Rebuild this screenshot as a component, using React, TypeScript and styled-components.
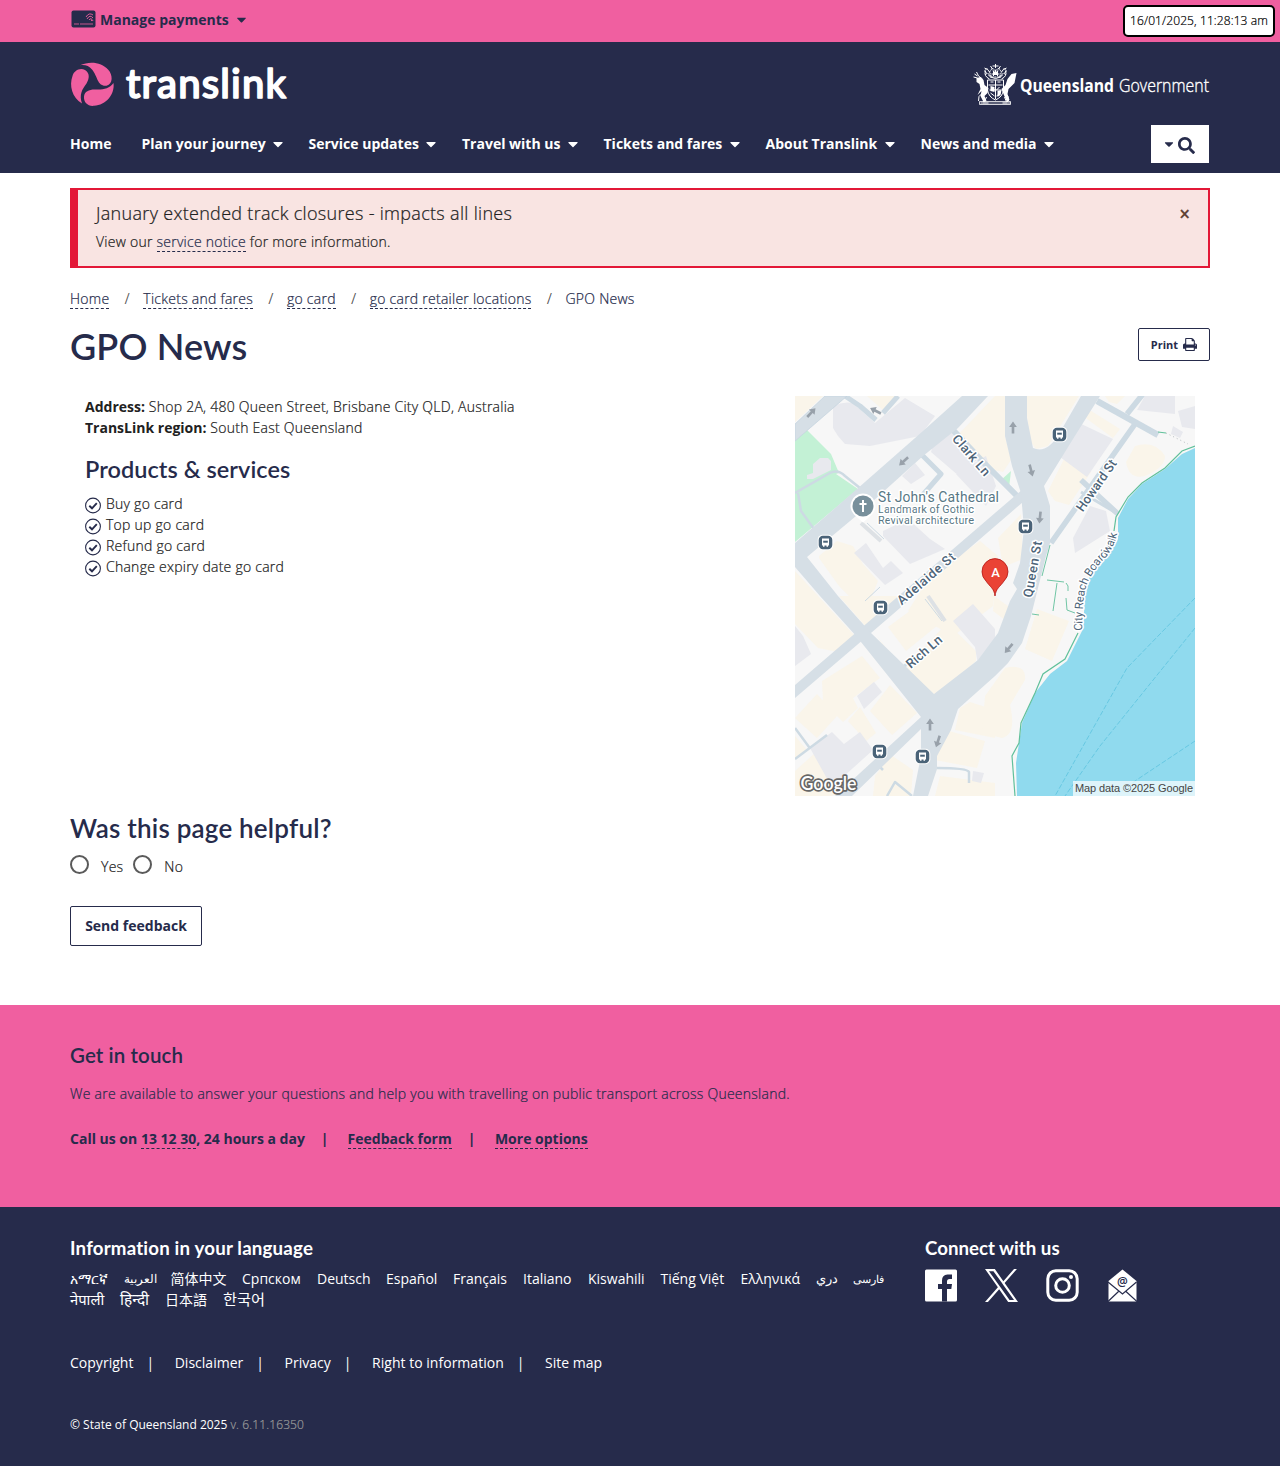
import React from "react";
import styled, { createGlobalStyle, css } from "styled-components";
import { FaCaretDown, FaSearch } from "react-icons/fa";

const navy = "#262b4b";
const pink = "#f05fa0";
const body = `"Open Sans", "Noto Sans", "Noto Sans CJK SC", sans-serif`;
const display = `Lato, "Open Sans", sans-serif`;

const Global = createGlobalStyle`
  body { margin: 0; background: #fff; font-family: ${body}; font-size: 14px; line-height: 21px; color: #212121; }
  * { box-sizing: border-box; }
  h1, h2, h3, p, ul { margin: 0; padding: 0; font-weight: inherit; }
  h1, h2, h3 { font-variant-ligatures: none; }
  ul { list-style: none; }
  button { font-family: inherit; cursor: pointer; }
`;

const lightText = css`
  font-weight: 300;
  letter-spacing: 0.25px;
  -webkit-text-stroke: 0.22px currentColor;
`;

const Page = styled.div`
  position: relative;
  width: 1280px;
  height: 1466px;
  overflow: hidden;
  display: flex;
  flex-direction: column;
`;
const Container = styled.div`
  width: 1140px;
  margin: 0 auto;
`;

const TopBar = styled.div`
  height: 42px;
  background: ${pink};
`;
const Payments = styled(Container)`
  display: flex;
  align-items: center;
  height: 39px;
  color: ${navy};
  font-weight: 700;
  padding-left: 1px;
  svg:first-child { margin-right: 4px; margin-top: -2px; }
  svg:last-child { margin-left: 5px; }
`;
const Timestamp = styled.div`
  ${lightText}
  position: absolute;
  top: 5px;
  right: 5px;
  width: 152px;
  height: 32px;
  border: 2px solid #000;
  border-radius: 5px;
  background: #fff;
  color: #000;
  font-size: 12px;
  line-height: 27px;
  letter-spacing: 0.1px;
  text-align: center;
  white-space: nowrap;
`;

const Header = styled.header`
  height: 131px;
  background: ${navy};
  color: #fff;
`;
const Brand = styled(Container)`
  display: flex;
  justify-content: space-between;
  align-items: center;
  height: 83px;
  svg { display: block; overflow: visible; }
`;
const Nav = styled(Container)`
  display: flex;
  align-items: center;
  height: 38px;
`;
const NavItem = styled.a<{ $width: number }>`
  width: ${(p) => p.$width}px;
  display: flex;
  align-items: center;
  font-weight: 700;
  margin-top: -2px;
  white-space: nowrap;
  svg { margin: 2px 0 0 4.500px; }
`;
const SearchButton = styled.button`
  width: 58px;
  height: 38px;
  margin-left: auto;
  margin-right: 1px;
  border: 0;
  background: #fff;
  color: ${navy};
  display: flex;
  align-items: center;
  gap: 2px;
  padding: 3px 0 0 11px;
  svg:first-child { margin-top: -4px; }
`;

const Alert = styled.section`
  ${lightText}
  height: 80px;
  margin-top: 15px;
  border: 2px solid #e31837;
  border-left-width: 8px;
  background: #f9e4e2;
  padding: 10px 18px 0;
  display: flex;
  justify-content: space-between;
`;
const AlertTitle = styled.h2`
  font-size: 18px;
  line-height: 27px;
  letter-spacing: 0.31px;
`;
const AlertText = styled.p`
  margin-top: 4px;
`;
const Close = styled.span`
  color: #5c4033;
  font-size: 19px;
  font-weight: 600;
  line-height: 28px;
  letter-spacing: 0;
`;
const DashLink = styled.a`
  color: ${navy};
  border-bottom: 1px dashed ${navy};
  line-height: 19px;
`;

const Crumbs = styled.nav`
  ${lightText}
  display: flex;
  align-items: flex-start;
  height: 21px;
  margin-top: 20px;
  color: ${navy};
  ${DashLink} { margin-top: 1px; }
`;
const Slash = styled.span`
  width: 34px;
  padding-left: 15.500px;
  color: #444;
`;
const TitleRow = styled.div`
  display: flex;
  justify-content: space-between;
  margin-top: 19px;
  height: 68px;
`;
const Title = styled.h1`
  font-family: ${display};
  font-size: 36px;
  line-height: 36px;
  font-weight: 600;
  color: ${navy};
  letter-spacing: 0.15px;
`;
const PrintButton = styled.button`
  width: 72px;
  height: 33px;
  border: 1px solid ${navy};
  border-radius: 2px;
  background: #fff;
  color: ${navy};
  font-size: 11px;
  font-weight: 700;
  display: flex;
  align-items: center;
  justify-content: center;
  gap: 5px;
  padding: 0;
`;
const Details = styled.div`
  display: flex;
  justify-content: space-between;
  padding: 0 15px;
  height: 400px;
`;
const Detail = styled.p`
  ${lightText}
`;
const Strong = styled.b`
  font-weight: 700;
  letter-spacing: 0;
  -webkit-text-stroke: 0;
`;
const Services = styled.h2`
  font-family: ${display};
  font-size: 23.500px;
  line-height: 30px;
  font-weight: 600;
  color: ${navy};
  margin: 16px 0 9px;
  letter-spacing: 0.05px;
`;
const Service = styled.li`
  ${lightText}
  display: flex;
  height: 21px;
  svg { margin: 3.500px 5px 0 0; }
`;

const Helpful = styled.h2`
  font-family: ${display};
  font-size: 26px;
  line-height: 32px;
  font-weight: 600;
  color: ${navy};
  margin-top: 16px;
  letter-spacing: 0.2px;
`;
const Choices = styled.div`
  ${lightText}
  display: flex;
  height: 30px;
  margin-top: 11px;
`;
const Choice = styled.label`
  display: flex;
  line-height: 24px;
  margin-right: 10px;
`;
const Radio = styled.span`
  width: 19px;
  height: 19px;
  border: 2px solid #5a5a5a;
  border-radius: 50%;
  margin-right: 12px;
`;
const Feedback = styled.button`
  display: block;
  width: 132px;
  height: 40px;
  margin-top: 21px;
  border: 1px solid ${navy};
  border-radius: 2px;
  background: #fff;
  color: ${navy};
  font-size: 14px;
  font-weight: 700;
  padding: 0 0 2px;
`;

const Contact = styled.section`
  height: 202px;
  margin-top: 59px;
  background: ${pink};
  color: ${navy};
  padding-top: 37px;
`;
const ContactTitle = styled.h2`
  font-family: ${display};
  font-size: 20.500px;
  line-height: 26px;
  font-weight: 600;
  letter-spacing: 0.1px;
`;
const ContactText = styled.p`
  ${lightText}
  margin-top: 15px;
`;
const ContactLinks = styled.div`
  display: flex;
  align-items: flex-start;
  margin-top: 24px;
  font-weight: 700;
  > a { margin-top: 1px; }
`;
const Bar = styled.span<{ $before: number; $after: number }>`
  padding-left: ${(p) => p.$before}px;
  padding-right: ${(p) => p.$after}px;
`;

const Footer = styled.footer`
  height: 259px;
  background: ${navy};
  color: #fff;
  font-weight: 400;
  padding-top: 29px;
`;
const FooterTop = styled(Container)`
  display: flex;
  height: 116px;
`;
const FooterTitle = styled.h3<{ $spacing?: number }>`
  font-family: ${display};
  font-size: 18.700px;
  line-height: 24px;
  font-weight: 700;
  letter-spacing: ${(p) => p.$spacing ?? 0}px;
`;
const Languages = styled.div`
  width: 855px;
`;
const LangList = styled.ul`
  display: flex;
  flex-wrap: wrap;
  column-gap: 16px;
  width: 830px;
  margin-top: 8px;
`;
const Lang = styled.li<{ $width: number; $size: number }>`
  width: ${(p) => p.$width}px;
  height: 21px;
  font-size: ${(p) => p.$size}px;
  white-space: nowrap;
`;
const Social = styled.div`
  display: flex;
  margin-top: 9px;
  gap: 28px;
`;
const Legal = styled(Container)`
  display: flex;
  letter-spacing: 0.02px;
`;
const Copyright = styled(Container)`
  margin-top: 41px;
  font-size: 12px;
`;
const Version = styled.span`
  ${lightText}
  color: #999;
  letter-spacing: 0.12px;
`;

const CardIcon = () => (
  <svg width="25" height="18" viewBox="0 0 25 18">
    <rect x="0.5" y="0.5" width="24" height="17" rx="2" fill={navy} />
    <path d="M3 14h5M9 14h13" stroke={pink} strokeWidth="0.8" />
    <g fill="none" stroke={pink} strokeWidth="0.9">
      <path d="M15 7q3-5 7-2M16 9q3-5 6-1M18 10q2-3 4 1M20 10l1 1" />
    </g>
  </svg>
);

const TranslinkLogo = () => (
  <svg width="222" height="46" viewBox="0 0 222 46">
    <g fill={pink} transform="translate(0 .5)">
      <path d="M10 3.8C20-1 32 1 38 8c5 5 5.200 15-1.500 16.200C27 25 28 15 22 8 19 4.500 15 3 10 3.800Z" />
      <path d="M12 42C2 36-1 24 2.500 14.500 4 9 10 6 15 8.500c5 3 4.500 8.500 1.500 13.500C12 28 9 33 12 42Z" />
      <path d="M43.500 21.500C45 33 36 43.500 24 44.300 18 45 13.500 41 14 35c.5-5 5-7 10.500-7C33 28.500 39 27.500 43.500 21.500Z" />
    </g>
    <text x="56" y="37" fontFamily="Lato, sans-serif" fontSize="40" fontWeight="500" fill="#fff" stroke="#fff" strokeWidth="1.600" strokeLinejoin="round" textLength="160">translink</text>
  </svg>
);

const Crest = () => (
  <g fill="none" stroke="#fff" strokeWidth="1" transform="translate(.5 1)">
    <path d="M16 9l3-4 3 3 3-3 3 4-2 5h-8z" strokeDasharray="2 .7" />
    <path d="M13 5l3 4M31 5l-3 4M22 1v4M19 3h6M14 10l4 4M30 10l-4 4M17 14q5 3 10 0M12 8q-2 5 4 8M32 8q2 5-4 8" />
    <path d="M11 5l2 1-2 2 2 2-1 2M33 5l-2 1 2 2-2 2 1 2M17 3l2 3M27 3l-2 3M18 11h8M15 12l3 3M29 12l-3 3M20 8v5M24 8v5" />
    <path d="M14 17h16v10q-1 7-8 10-7-3-8-10z" />
    <path d="M15 22h14M22 17v19M16 27h12M17 19h3M24 19h3M18 24l3 3M26 24l-3 3M17 30l4 3M27 30l-4 3" />
    <path d="M1 11l3 2M0 14l4 1M3 9l2 4M5 13l4 3M5 38q-1-5 4-8M7 40h8M29 40h8M35 38q1-5-4-8M10 32v7M13 34l-2 5M34 32v7M31 34l2 5" />
    <g fill="#fff" stroke="none">
      <path d="M3 15l4-1 3 3 1 5 4 3-1 5-3 3 2 5-3 1-3-6 1-5-4 4 3-6-1-5-3-2z" />
      <path d="M43 10l-2 10-6 6-1 5 2 6-3 1-3-7-2-5 4-4 2-6 4-5z" />
      <path d="M17 23l4 1v5l-4-1zM24 28l4-1-1 5-3 2zM19 6l2 3 1-3 1 3 2-3-1 6h-4z" />
    </g>
    <path d="M6 38.500h31v3H6z" strokeWidth=".8" />
    <path d="M10 40h23" strokeDasharray="1 1" />
  </g>
);

const GovLogo = () => (
  <svg width="237" height="44" viewBox="0 0 237 44">
    <Crest />
    <g fontFamily="'Open Sans', sans-serif" fontSize="17.500" fill="#fff">
      <text x="47" y="29.500" fontWeight="700" textLength="94" lengthAdjust="spacingAndGlyphs">Queensland</text>
      <text x="146" y="29.500" fontWeight="300" stroke="#fff" strokeWidth=".35" textLength="90" lengthAdjust="spacingAndGlyphs">Government</text>
    </g>
  </svg>
);

const PrintIcon = () => (
  <svg width="14" height="13" viewBox="64 128 1664 1536" fill="currentColor">
    <path d="M448 1536h896v-256h-896v256zm0-640h896v-384h-160q-40 0-68-28t-28-68v-160h-640v640zm1152 64q0-26-19-45t-45-19-45 19-19 45 19 45 45 19 45-19 19-45zm128 0v416q0 13-9.500 22.500t-22.500 9.500h-224v160q0 40-28 68t-68 28h-960q-40 0-68-28t-28-68v-160h-224q-13 0-22.500-9.500t-9.500-22.500v-416q0-79 56.500-135.500t135.500-56.500h64v-544q0-40 28-68t68-28h672q40 0 88 20t76 48l152 152q28 28 48 76t20 88v256h64q79 0 135.500 56.500t56.500 135.500z" />
  </svg>
);

const CheckIcon = () => (
  <svg width="16" height="17" viewBox="0 0 16 17" fill="none" stroke={navy}>
    <circle cx="8" cy="8.500" r="7.400" strokeWidth="1.100" />
    <path d="M4.300 8.700l2.700 2.600 4.800-5.100" strokeWidth="1.900" />
  </svg>
);

const BusStop = ({ x, y }: { x: number; y: number }) => (
  <g transform={`translate(${x} ${y})`}>
    <rect x="-7.800" y="-7.800" width="15.600" height="15.600" rx="5" fill="#fff" />
    <rect x="-6.800" y="-6.800" width="13.600" height="13.600" rx="4.200" fill="#4a6378" />
    <path d="M-3.500-4h7v7h-1v1.300h-1.500V3h-2v1.300h-1.500V3h-1z" fill="#fff" />
    <path d="M-2.300-1.800h4.600v2h-4.600z" fill="#4a6378" />
  </g>
);

const Arrow = ({ x, y, r }: { x: number; y: number; r: number }) => (
  <path transform={`translate(${x} ${y}) rotate(${r}) scale(1.100)`} d="M0-6l3.500 5H1.200v6h-2.400v-6h-2.300z" fill="#98a1aa" />
);

const MapPicture = () => (
  <svg width="400" height="400" viewBox="0 0 400 400" fontWeight="400">
    <rect width="400" height="400" fill="#f7f7f7" />
    <g fill="#faf5ea">
      <path d="M0 0h28L0 26zM72 0h30L88 14zM200 0h10v40l6 24-8 12-8-2-38-34z" />
      <path d="M231 0h53l-31 50-12 3-6-8-3-25zM288 20l5-7 32 20-7 9zM270 61l26 15-22 33-14-4-7-10z" />
      <path d="M340 50q20-6 30 10 0 12-20 20-16 4-19-14zM200 54q10-8 11 2v12l-11 8zM203 142l23-24 2 45-20 8zM310 0h20l-8 8-8-2z" />
      <path d="M24 160l18-15 16 5 10 18 15 17-10 25-15-6-14-14-20-28z" />
      <path d="M0 175l60 65-17 16-20-4-23-24zM44 200l28 32 33-32zM135 180l50-35 18 15-5 50-40 30-45-25z" />
      <path d="M93 231l30-22 20 20-32 26zM82 240l20 26 3 8zM110 272l42-45 29 28v10l-40 35z" />
      <path d="M27 285l40-25 18 22-27 20 5 10-15 14-20-20zM0 322l22-24 20 22-20 22zM75 315l20-26 27 28-25 22zM53 325l12-14 16 26-10 8z" />
      <path d="M0 340l12 14-12 8zM0 375l20-18 22 40-5 3H0zM80 380l16-21 22 15-2 26H78zM165 312l10-6 25 8v28l-40-8zM147 333l43 12-8 27-42-8zM145 380l55 7v13h-60z" />
      <path d="M190 300l20-28q22-5 20 12l-15 25q7 30-8 33l-20-5zM242 213l32 12-17 40-27-12zM199 200l25 18-6 12-20-15z" />
    </g>
    <g fill="#e8e9ee">
      <path d="M38 10q10-5 20-3l22 20 30-25 30 18-15 20-50 10-25-2-7-8-5-8z" />
      <path d="M140 42l16-8 28 28-20 18-28-24zM161 78l30-18 10 30-10 20zM107 80l13-13 10 12-14 9zM88 135l25-12 22 20 15 10-35 15-27-28z" />
      <path d="M59 157l12-10 17 25 8-7 12 12-18 12zM158 225l20-17 22 25v24l-17 12-3-18z" />
      <path d="M280 25l38 18-26 38-27-20zM350 0h30v18l-38-4zM383 15l17-5v23l-13-2zM295 110l16 5 4 20-35 22-2-15zM378 30l10 6-3 6-9-4z" />
      <path d="M0 230l8 10 8 18-16 12zM62 300l17-14 8 10-18 17zM15 352l22-16 12 12 16-12 13 18-30 27-8 16zM178 375l11 2-3 10-9-2z" />
    </g>
    <g fill="#c3f1d5">
      <path d="M0 45l12-11 24 24 8 19-3 1 22 15L0 146z" />
      <path d="M205 85l11-10-2 17z" />
    </g>
    <path d="M12 79l6-2v-9l7-6h8l3 3v9l-18 9h-6z" fill="#e8e9ee" />
    <g fill="none" stroke="#cddae3" strokeLinejoin="round">
      <path d="M0 97l35-20q8-4 15 3l15 12M3 97l3 18 13 18" strokeWidth="2.500" />
      <path d="M50 0l15 10 16 14M88 17l15-17M126 58l20 20-20 23" strokeWidth="5" />
      <path d="M158 34l30 32 34 34" strokeWidth="6" />
      <path d="M256 147l84-119M332 18l16-20M286 84l37 34" strokeWidth="5.500" />
      <path d="M302 5l61 34" strokeWidth="6.500" />
      <path d="M286 96l37 22M107 272l10-8" strokeWidth="3" />
      <path d="M0 332l14 19M0 363l32-24M142 372q30 0 32 4v11M92 400l8-14 17 14M84 370l4 4" strokeWidth="2.500" />
      <path d="M72 127l17 16M130 203l17 22M70 205l15-14" strokeWidth="1" />
    </g>
    <g fill="#d6dfe6">
      <path d="M30 0L0 28v17L52 0z" stroke="#c3d2de" strokeWidth=".7" />
      <path d="M0 289L57 240 200 117 228 93V106L76 237 0 302z" />
      <path d="M167 0L128 35 62 93 0 147V171L25 200 62 241 126 321 40 400H57L126 333V360L118 400H133L142 373V360L156 334 163 313 200 280 213 267 227 247 236 220 241 200 251 160 255 147V110L249 90 278 43 305 0H286L264 38Q252 58 238 52L232 22V0H210V40L217 70 226 97 229 133 225 167 218 187 222 193 215 205 203 237 183 264 139 298 76 237 43 200 12 161 67 115 128 60 163 32 193 0z" />
    </g>
    <path d="M66 127l20 18M133 200l17 25" stroke="#dde1e5" strokeWidth="4" />
    <path d="M400 52l-13 6-17 15-23 15-14 15-10 19v21l-10 17-16 10-7 30-2 33-16 32-17 13-15 19-13 30-6 40 1 33h178z" fill="#90daee" />
    <g fill="none" stroke="#61c09b" strokeWidth="1.200">
      <path d="M400 50l-13 5-17 17-23 15-14 14-12 20-2 14M363 36l8 1M283 237l-13 26-22 15-8 19-14 30-2 20-7 13 3 40" />
      <path d="M255 149l-8 31M252 184l17 2M271 187q3 2 2 8M262 187l-4 28M237 218l7 1M271 202l1 12 8 3" strokeWidth=".9" />
    </g>
    <path d="M371 37l22 11" stroke="#b5bcc0" strokeDasharray="1 3" />
    <g fill="none" stroke="#67c8e2" strokeDasharray="5 2">
      <path d="M400 202l-68 70-72 128M400 232l-95 118-35 50M400 345l-60 40-18 14" />
    </g>
    <Arrow x={16} y={17} r={43} /><Arrow x={81} y={15} r={-63} /><Arrow x={109} y={65} r={228} />
    <Arrow x={218} y={32} r={0} /><Arrow x={236} y={74} r={165} /><Arrow x={245} y={121} r={186} />
    <Arrow x={214} y={252} r={220} /><Arrow x={135} y={329} r={0} /><Arrow x={143} y={345} r={198} />
    <BusStop x={30.500} y={146.500} /><BusStop x={264.500} y={38.500} /><BusStop x={230.500} y={130.500} />
    <BusStop x={85.500} y={211.500} /><BusStop x={84.500} y={355.500} /><BusStop x={127.500} y={360.500} />
    <g fontFamily="Roboto, sans-serif" fill="#4d6478" stroke="#fff" strokeWidth="3" strokeLinejoin="round" paintOrder="stroke" textAnchor="middle">
      <g fontSize="13" fontWeight="500">
        <text transform="translate(173 62) rotate(49)" textLength="50">Clark Ln</text>
        <text transform="translate(305 92) rotate(-55)" textLength="60">Howard St</text>
        <text transform="translate(134 186) rotate(-41)" textLength="72">Adelaide St</text>
        <text transform="translate(242 174) rotate(-80)" textLength="57">Queen St</text>
        <text transform="translate(132 259) rotate(-41)" textLength="43">Rich Ln</text>
      </g>
      <path id="boardwalk" d="M287 235C288 185 292 186 306 166Q320 154 323 133" fill="none" stroke="none" />
      <text fontSize="11.500" textAnchor="start"><textPath href="#boardwalk" textLength="107">City Reach Boardwalk</textPath></text>
      <g textAnchor="start" fill="#587784">
        <text x="83" y="106" fontSize="14" textLength="121">St John's Cathedral</text>
        <text x="83" y="117" fontSize="11" textLength="96">Landmark of Gothic</text>
        <text x="83" y="128" fontSize="11" textLength="96">Revival architecture</text>
      </g>
    </g>
    <path d="M68 97.500a12.500 12.500 0 0 1 9 21l-9 8-9-8a12.500 12.500 0 0 1 9-21z" fill="#fff" />
    <circle cx="68" cy="110" r="10.500" fill="#78909c" />
    <path d="M68 104v12M64.500 108h7" stroke="#fff" strokeWidth="2" />
    <path d="M200 200c-1-8-5-9-9-15a13 13 0 1 1 18 0c-4 6-8 7-9 15z" fill="#ea4335" stroke="#b31412" strokeWidth=".8" />
    <text x="200.500" y="181" textAnchor="middle" fontFamily="Roboto, sans-serif" fontSize="13" fontWeight="500" fill="#fff">A</text>
    <text x="5.500" y="394" fontFamily="Lato, sans-serif" fontSize="19" fontWeight="600" fill="#fff" stroke="#666" strokeWidth="3.500" strokeLinejoin="round" paintOrder="stroke" textLength="56" lengthAdjust="spacingAndGlyphs">Google</text>
    <rect x="278" y="385" width="122" height="15" fill="#fff" opacity=".7" />
    <text x="280" y="396" fontFamily="'Liberation Sans', sans-serif" fontSize="11" fill="#444" textLength="118">Map data ©2025 Google</text>
  </svg>
);

const FacebookIcon = () => (
  <svg width="32" height="33" viewBox="0 0 32 33">
    <rect y=".5" width="32" height="32" rx="1.500" fill="#fff" />
    <path d="M17 32.500V20h-4v-5h4v-3.500Q17 6 22.500 5.500H27v4.500h-2.500Q22 10 22 12.500V15h5l-.7 5H22v12.500z" fill={navy} />
  </svg>
);
const XIcon = () => (
  <svg width="33" height="33" viewBox="0 0 1200 1227" preserveAspectRatio="none" fill="#fff">
    <path d="M714.163 519.284L1160.890 0H1055.030L667.137 450.887L357.328 0H0L468.492 681.821L0 1226.370H105.866L515.491 750.218L842.672 1226.370H1200L714.137 519.284H714.163ZM569.165 687.828L521.697 619.934L144.011 79.694H306.615L611.412 515.685L658.880 583.579L1055.080 1150.300H892.476L569.165 687.854V687.828Z" />
  </svg>
);
const InstagramIcon = () => (
  <svg width="33" height="33" viewBox="0 0 33 33" fill="none" stroke="#fff" strokeWidth="3">
    <rect x="1.800" y="1.800" width="29.400" height="29.400" rx="8" />
    <circle cx="16.500" cy="16.500" r="6.800" />
    <circle cx="25" cy="8" r="2" fill="#fff" stroke="none" />
  </svg>
);
const MailIcon = () => (
  <svg width="30" height="33" viewBox="0 0 30 33">
    <path d="M15.500 .5l14 11.500V32.500h-28V12z" fill="#fff" />
    <path d="M1 13l14.500 12 14-12M1 32.500l10.500-10M30 32.500L19 22.500" fill="none" stroke={navy} strokeWidth="1.200" />
    <text x="15.500" y="16.500" textAnchor="middle" fontFamily="'Open Sans', sans-serif" fontSize="12" fontWeight="600" fill={navy}>@</text>
  </svg>
);

const navItems: [string, number][] = [
  ["Home", 71.5], ["Plan your journey", 167], ["Service updates", 153.5], ["Travel with us", 141.5],
  ["Tickets and fares", 162], ["About Translink", 155], ["News and media", 140],
];
const services = ["Buy go card", "Top up go card", "Refund go card", "Change expiry date go card"];
const languages: [string, number, number][] = [
  ["አማርኛ", 37.5, 14], ["العربية", 31, 12], ["简体中文", 55.5, 14], ["Српском", 59, 14], ["Deutsch", 53, 14],
  ["Español", 51, 14], ["Français", 54, 14], ["Italiano", 49, 14], ["Kiswahili", 56.5, 14], ["Tiếng Việt", 64, 14],
  ["Ελληνικά", 59.5, 14], ["دري", 20.5, 13], ["فارسی", 31, 11], ["नेपाली", 34, 14.8], ["हिन्दी", 29, 15.4],
  ["日本語", 42, 14], ["한국어", 42, 15.2],
];
const crumbs = ["Home", "Tickets and fares", "go card", "go card retailer locations"];
const legal = ["Copyright", "Disclaimer", "Privacy", "Right to information"];

export default function App() {
  return (
    <Page>
      <Global />
      <TopBar>
        <Payments><CardIcon />Manage payments<FaCaretDown size={15} /></Payments>
        <Timestamp>16/01/2025, 11:28:13 am</Timestamp>
      </TopBar>
      <Header>
        <Brand><TranslinkLogo /><GovLogo /></Brand>
        <Nav>
          {navItems.map(([label, width], i) => (
            <NavItem key={label} $width={width}>{label}{i > 0 && <FaCaretDown size={16} />}</NavItem>
          ))}
          <SearchButton><FaCaretDown size={14} /><FaSearch size={17} /></SearchButton>
        </Nav>
      </Header>
      <Container as="main">
        <Alert>
          <div>
            <AlertTitle>January extended track closures - impacts all lines</AlertTitle>
            <AlertText>View our <DashLink>service notice</DashLink> for more information.</AlertText>
          </div>
          <Close>×</Close>
        </Alert>
        <Crumbs>
          {crumbs.map((c) => <React.Fragment key={c}><DashLink>{c}</DashLink><Slash>/</Slash></React.Fragment>)}
          GPO News
        </Crumbs>
        <TitleRow>
          <Title>GPO News</Title>
          <PrintButton>Print <PrintIcon /></PrintButton>
        </TitleRow>
        <Details>
          <div>
            <Detail><Strong>Address:</Strong> Shop 2A, 480 Queen Street, Brisbane City QLD, Australia</Detail>
            <Detail><Strong>TransLink region:</Strong> South East Queensland</Detail>
            <Services>Products &amp; services</Services>
            <ul>{services.map((s) => <Service key={s}><CheckIcon />{s}</Service>)}</ul>
          </div>
          <MapPicture />
        </Details>
        <Helpful>Was this page helpful?</Helpful>
        <Choices>
          <Choice><Radio />Yes</Choice>
          <Choice><Radio />No</Choice>
        </Choices>
        <Feedback>Send feedback</Feedback>
      </Container>
      <Contact>
        <Container>
          <ContactTitle>Get in touch</ContactTitle>
          <ContactText>We are available to answer your questions and help you with travelling on public transport across Queensland.</ContactText>
          <ContactLinks>
            <span>Call us on <DashLink>13 12 30</DashLink>, 24 hours a day</span>
            <Bar $before={16} $after={19}>|</Bar>
            <DashLink>Feedback form</DashLink>
            <Bar $before={16} $after={19.5}>|</Bar>
            <DashLink>More options</DashLink>
          </ContactLinks>
        </Container>
      </Contact>
      <Footer>
        <FooterTop>
          <Languages>
            <FooterTitle $spacing={0.18}>Information in your language</FooterTitle>
            <LangList>{languages.map(([l, w, s]) => <Lang key={l} $width={w} $size={s}>{l}</Lang>)}</LangList>
          </Languages>
          <div>
            <FooterTitle>Connect with us</FooterTitle>
            <Social><FacebookIcon /><XIcon /><InstagramIcon /><MailIcon /></Social>
          </div>
        </FooterTop>
        <Legal>
          {legal.map((l) => <React.Fragment key={l}><span>{l}</span><Bar $before={13} $after={20.5}>|</Bar></React.Fragment>)}
          <span>Site map</span>
        </Legal>
        <Copyright>© State of Queensland 2025 <Version>v. 6.11.16350</Version></Copyright>
      </Footer>
    </Page>
  );
}
